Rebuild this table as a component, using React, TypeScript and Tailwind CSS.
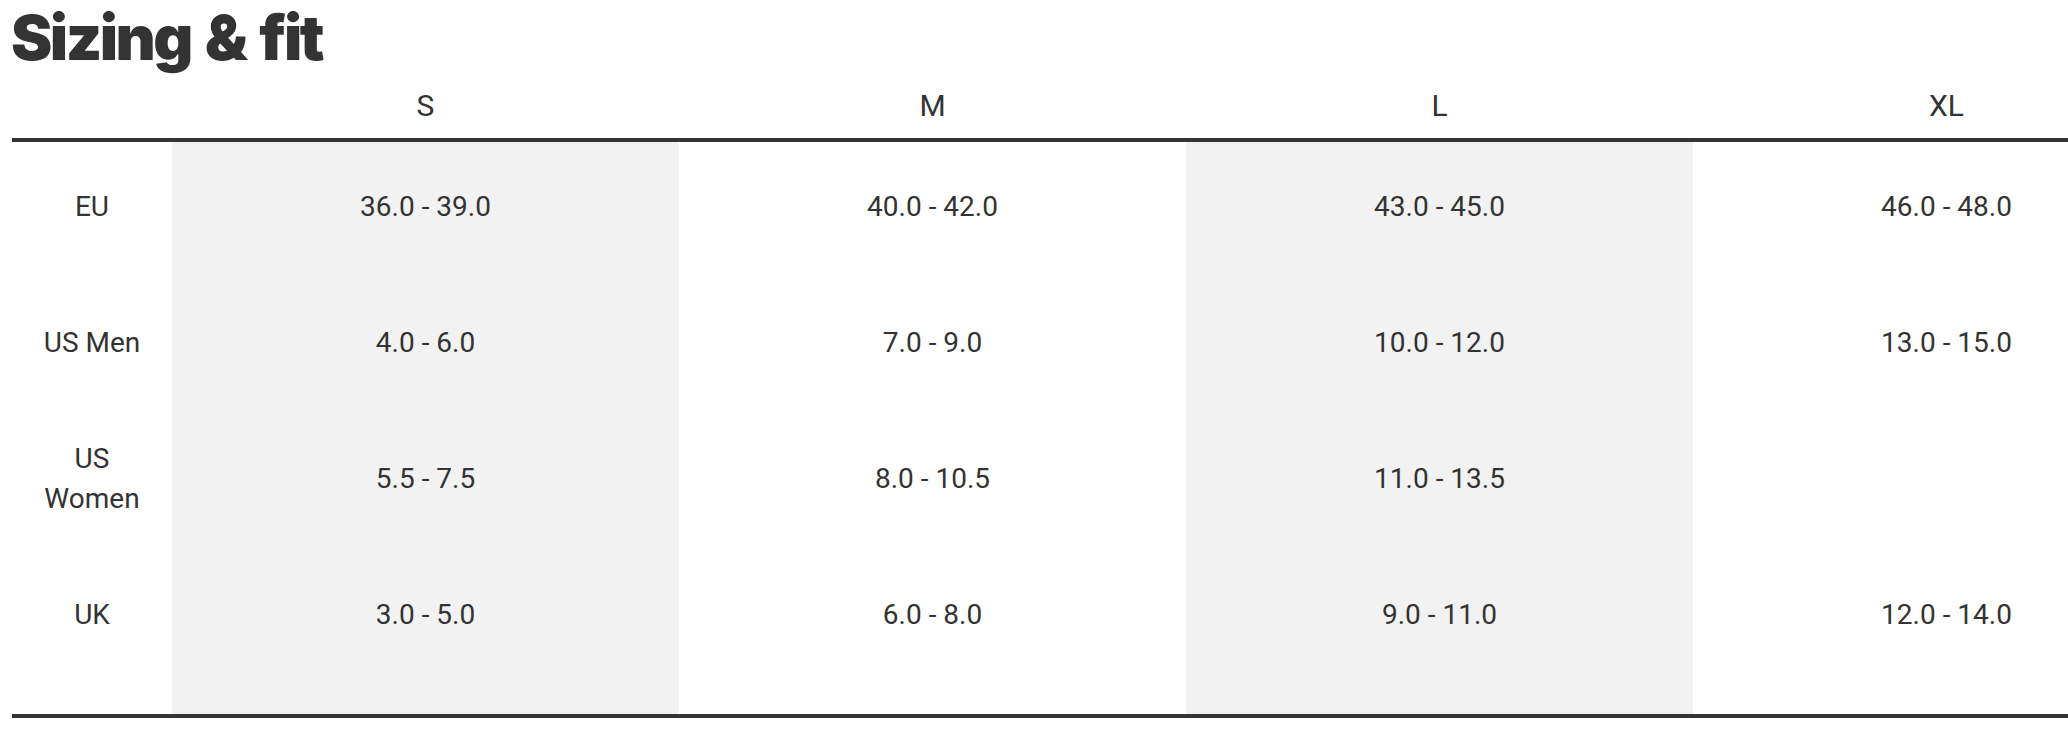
import React from 'react';

type SizeRow = {
  label: string;
  values: string[];
};

const sizes = ['S', 'M', 'L', 'XL'];

const rows: SizeRow[] = [
  { label: 'EU', values: ['36.0 - 39.0', '40.0 - 42.0', '43.0 - 45.0', '46.0 - 48.0'] },
  { label: 'US Men', values: ['4.0 - 6.0', '7.0 - 9.0', '10.0 - 12.0', '13.0 - 15.0'] },
  { label: 'US Women', values: ['5.5 - 7.5', '8.0 - 10.5', '11.0 - 13.5', ''] },
  { label: 'UK', values: ['3.0 - 5.0', '6.0 - 8.0', '9.0 - 11.0', '12.0 - 14.0'] },
];

// columns S and L are shaded
const shaded = (i: number) => i % 2 === 0;

const App: React.FC = () => {
  return (
    <div className="h-[730px] w-full overflow-hidden bg-white pl-3 text-[#333333]">
      <h2
        className="-ml-[1px] mt-[6px] text-[62px] font-black leading-[64px] tracking-[-2.5px] [word-spacing:4px]"
        style={{ fontFamily: 'Inter, "Liberation Sans", Arial, sans-serif' }}
      >
        Sizing &amp; fit
      </h2>

      <div className="w-[2188px]" style={{ fontFamily: 'Roboto, "Noto Sans", sans-serif' }}>
        {/* Header */}
        <div className="grid grid-cols-[160px_repeat(4,507px)] border-b-4 border-[#333333]">
          <div className="h-[68px]" />
          {sizes.map(size => (
            <div key={size} className="flex h-[68px] items-center justify-center pt-[3px] text-[30px] leading-none">
              {size}
            </div>
          ))}
        </div>

        {/* Body */}
        <div className="grid grid-cols-[160px_repeat(4,507px)] border-b-4 border-[#333333] text-[28px] leading-[40px]">
          {rows.map(row => (
            <React.Fragment key={row.label}>
              <div className="flex h-[136px] items-center justify-center pb-[6px] text-center">
                <span className="max-w-[110px]">{row.label}</span>
              </div>
              {row.values.map((value, i) => (
                <div
                  key={i}
                  className={`flex h-[136px] items-center justify-center pb-[6px] text-center ${
                    shaded(i) ? 'bg-[#f2f2f2]' : ''
                  }`}
                >
                  {value}
                </div>
              ))}
            </React.Fragment>
          ))}
          {/* bottom spacing */}
          <div className="h-[28px]" />
          {sizes.map((size, i) => (
            <div key={size} className={`h-[28px] ${shaded(i) ? 'bg-[#f2f2f2]' : ''}`} />
          ))}
        </div>
      </div>
    </div>
  );
};

export default App;
